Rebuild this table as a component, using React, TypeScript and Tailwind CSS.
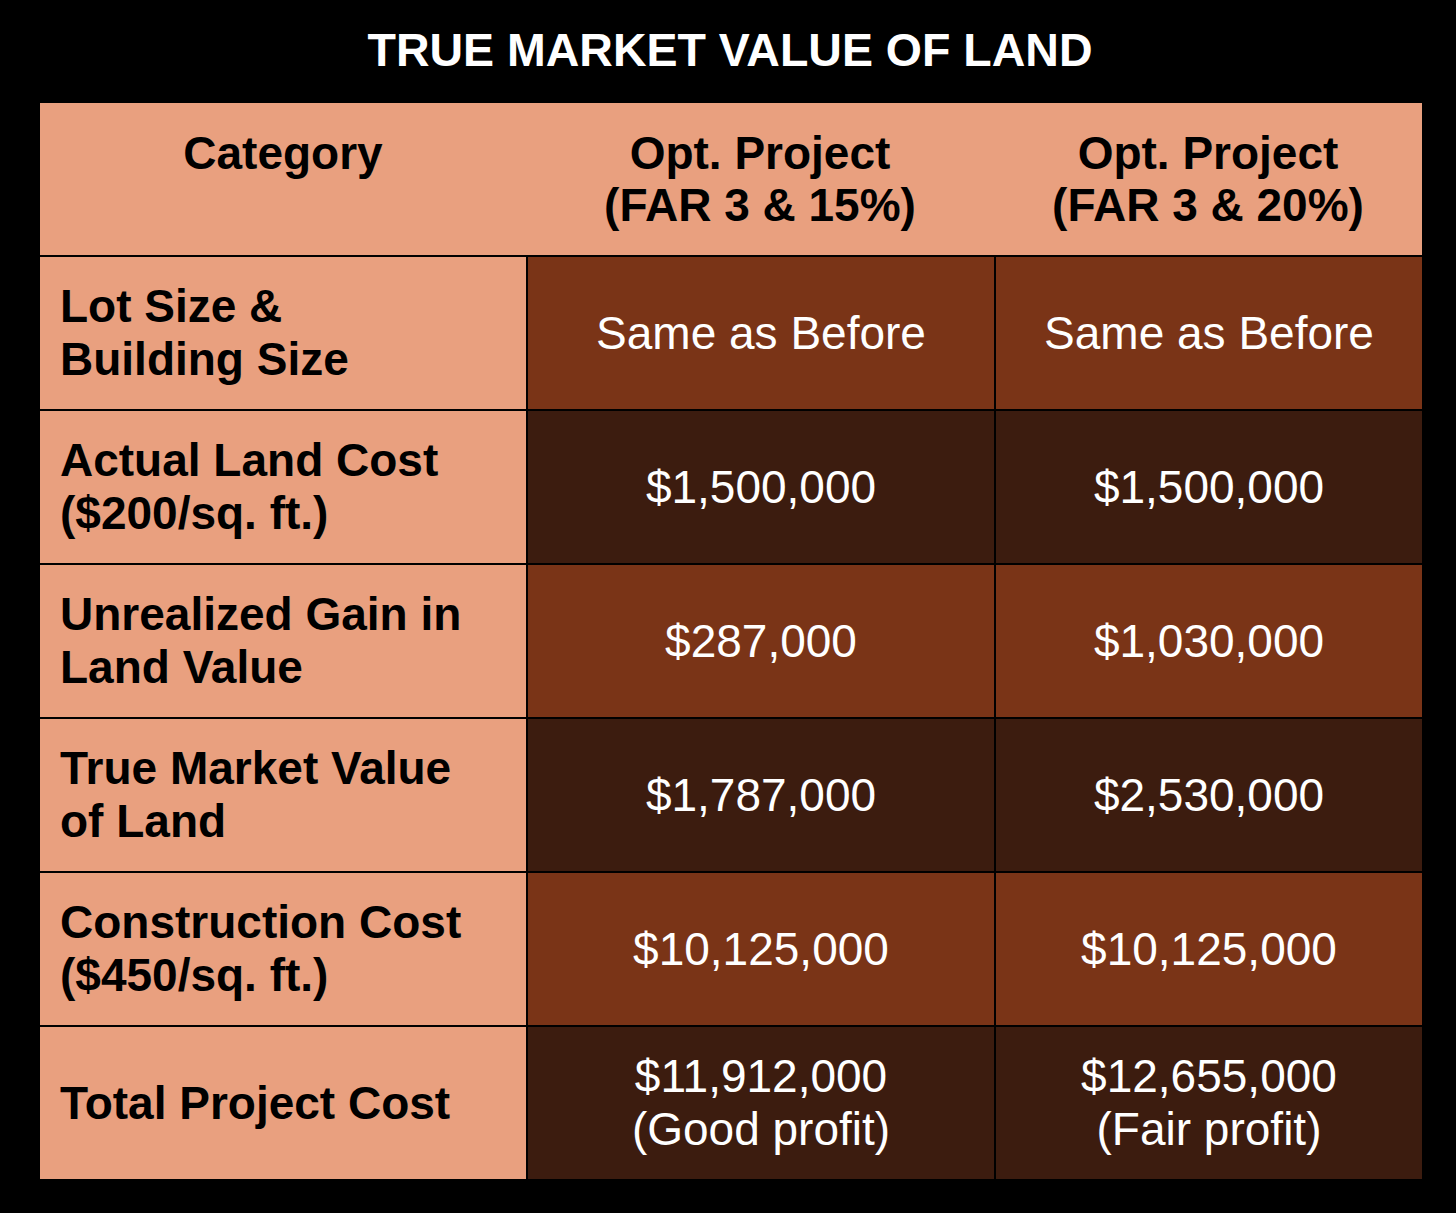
import React from "react";

const rows = [
  { label: ["Lot Size &", "Building Size"], a: ["Same as Before"], b: ["Same as Before"], dark: false },
  { label: ["Actual Land Cost", "($200/sq. ft.)"], a: ["$1,500,000"], b: ["$1,500,000"], dark: true },
  { label: ["Unrealized Gain in", "Land Value"], a: ["$287,000"], b: ["$1,030,000"], dark: false },
  { label: ["True Market Value", "of Land"], a: ["$1,787,000"], b: ["$2,530,000"], dark: true },
  { label: ["Construction Cost", "($450/sq. ft.)"], a: ["$10,125,000"], b: ["$10,125,000"], dark: false },
  { label: ["Total Project Cost"], a: ["$11,912,000", "(Good profit)"], b: ["$12,655,000", "(Fair profit)"], dark: true },
];

const Lines = ({ lines }: { lines: string[] }) => (
  <div>
    {lines.map((l, i) => (
      <div key={i}>{l}</div>
    ))}
  </div>
);

const App = () => {
  return (
    <div
      className="w-[1456px] h-[1213px] bg-black flex flex-col items-start"
      style={{ fontFamily: '"Liberation Sans", Arial, sans-serif' }}
    >
      {/* Title */}
      <div className="w-full h-[103px] flex items-center justify-center pb-[2px]">
        <h1 className="text-white font-bold text-[46.5px] leading-none ml-[4px]">TRUE MARKET VALUE OF LAND</h1>
      </div>

      {/* Table */}
      <div className="ml-[40px] w-[1382px] bg-[#e9a07f]">
        {/* Header */}
        <div className="flex h-[152px] text-black font-bold text-[46px] leading-[52px] text-center pt-[24px]">
          <div className="w-[486px]">Category</div>
          <div className="w-[468px]">
            <div>Opt. Project</div>
            <div>(FAR 3 &amp; 15%)</div>
          </div>
          <div className="flex-1">
            <div>Opt. Project</div>
            <div>(FAR 3 &amp; 20%)</div>
          </div>
        </div>

        {rows.map((r, i) => (
          <div key={i} className="flex h-[154px] border-t-2 border-black">
            <div className="w-[486px] flex items-center pl-[20px] text-black font-bold text-[46px] leading-[53px]">
              <Lines lines={r.label} />
            </div>
            <div
              className={`w-[468px] border-l-2 border-black flex items-center justify-center text-center text-white text-[46px] leading-[53px] ${r.dark ? "bg-[#3c1c0f]" : "bg-[#7a3417]"}`}
            >
              <Lines lines={r.a} />
            </div>
            <div
              className={`flex-1 border-l-2 border-black flex items-center justify-center text-center text-white text-[46px] leading-[53px] ${r.dark ? "bg-[#3c1c0f]" : "bg-[#7a3417]"}`}
            >
              <Lines lines={r.b} />
            </div>
          </div>
        ))}
      </div>
    </div>
  );
};

export default App;
